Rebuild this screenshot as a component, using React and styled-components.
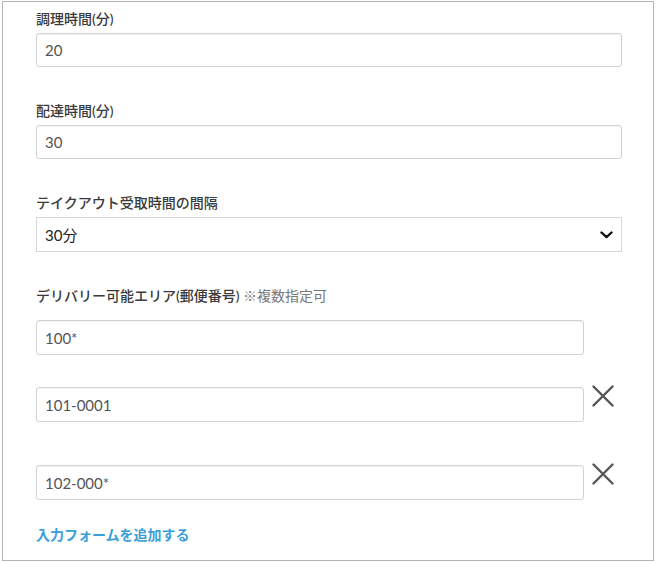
import React from "react";
import styled, { createGlobalStyle } from "styled-components";

const GlobalStyle = createGlobalStyle`
  html, body {
    margin: 0;
    padding: 0;
    background: #fff;
  }
  body {
    font-family: "Lato", "Noto Sans CJK JP", sans-serif;
    color: #333;
  }
`;

const fields = [
  { label: "調理時間(分)", value: "20" },
  { label: "配達時間(分)", value: "30" },
];

const areas = [
  { value: "100*", removable: false },
  { value: "101-0001", removable: true },
  { value: "102-000*", removable: true },
];

const ChevronIcon = () => (
  <svg width="13" height="8" viewBox="0 0 13 8">
    <path
      d="M1.5 1.5 L6.5 6.2 L11.5 1.5"
      fill="none"
      stroke="#111"
      strokeWidth="2.4"
      strokeLinecap="round"
      strokeLinejoin="round"
    />
  </svg>
);

const CloseIcon = () => (
  <svg width="22" height="22" viewBox="0 0 22 22">
    <path
      d="M1.5 1.5 L20.5 20.5 M20.5 1.5 L1.5 20.5"
      fill="none"
      stroke="#555"
      strokeWidth="2.4"
      strokeLinecap="round"
    />
  </svg>
);

const App = () => (
  <>
    <GlobalStyle />
    <Frame>
      {fields.map(({ label, value }) => (
        <Group key={label}>
          <Label>{label}</Label>
          <TextInput defaultValue={value} />
        </Group>
      ))}
      <Group>
        <Label>テイクアウト受取時間の間隔</Label>
        <SelectBox>
          <span>30分</span>
          <ChevronIcon />
        </SelectBox>
      </Group>
      <Label $gap={14}>
        デリバリー可能エリア(郵便番号) <Note>※複数指定可</Note>
      </Label>
      {areas.map(({ value, removable }) => (
        <AreaRow key={value}>
          <AreaInput defaultValue={value} $offset={removable} />
          {removable && (
            <RemoveButton type="button" aria-label="削除">
              <CloseIcon />
            </RemoveButton>
          )}
        </AreaRow>
      ))}
      <AddLink href="#">入力フォームを追加する</AddLink>
    </Frame>
  </>
);

export default App;

const Frame = styled.div`
  box-sizing: border-box;
  width: 652px;
  height: 560px;
  margin: 1px 0 0 2px;
  padding: 7px 31px 0 33px;
  border: 1px solid #b4b4b4;
  display: flex;
  flex-direction: column;
`;

const Group = styled.div`
  display: flex;
  flex-direction: column;
  margin-bottom: 34px;
`;

const Label = styled.div`
  font-size: 14px;
  line-height: 20px;
  font-weight: 500;
  color: #3a3a3a;
  margin-bottom: ${({ $gap }) => $gap ?? 4}px;
`;

const Note = styled.span`
  font-weight: 400;
  color: #777;
`;

const TextInput = styled.input`
  box-sizing: border-box;
  width: 100%;
  height: 34px;
  padding: 0 8px;
  border: 1px solid #d2d2d2;
  border-radius: 3px;
  box-shadow: inset 0 1px 1px rgba(0, 0, 0, 0.05);
  font-family: inherit;
  font-size: 15px;
  color: #555;
  outline: none;
`;

const SelectBox = styled.div`
  box-sizing: border-box;
  height: 35px;
  padding: 0 8px;
  border: 1px solid #d6d6d6;
  display: flex;
  align-items: center;
  justify-content: space-between;
  font-size: 15px;
  color: #222;
`;

const AreaRow = styled.div`
  display: flex;
  align-items: flex-start;

  & + & {
    margin-top: 30px;
  }
`;

const AreaInput = styled(TextInput)`
  width: 548px;
  height: 35px;
  margin-top: ${({ $offset }) => ($offset ? 2 : 0)}px;
`;

const RemoveButton = styled.button`
  height: 48px;
  margin-left: 8px;
  padding: 0;
  border: none;
  background: none;
  display: flex;
  align-items: flex-start;
  cursor: pointer;
`;

const AddLink = styled.a`
  margin-top: 14px;
  font-size: 14px;
  line-height: 20px;
  font-weight: 700;
  color: #3b9ed9;
  text-decoration: none;
  align-self: flex-start;
`;
